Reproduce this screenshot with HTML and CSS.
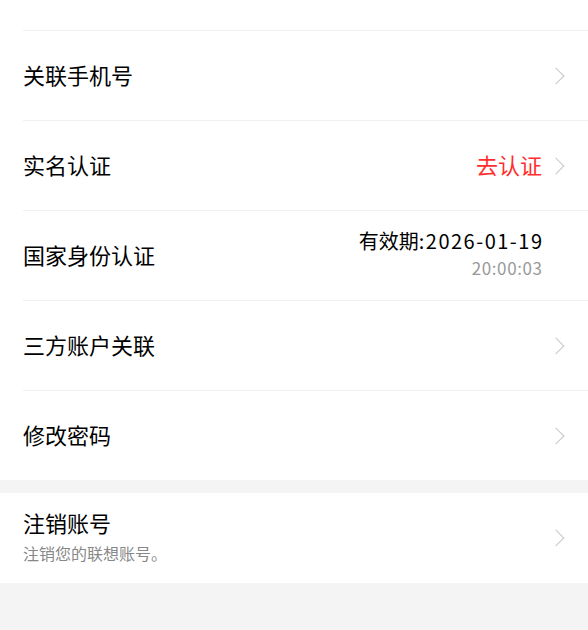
FILE: index.html
```html
<!DOCTYPE html>
<html lang="zh-CN">
<head>
    <meta charset="UTF-8">
    <title>账号与安全</title>
    <link rel="stylesheet" href="styles.css">
</head>
<body>
<div class="page">
    <div class="group">
        <div class="top-space"></div>
        <div class="row">
            <span class="label">关联手机号</span>
            <span class="arrow"></span>
        </div>
        <div class="row">
            <span class="label">实名认证</span>
            <span class="value red">去认证</span>
            <span class="arrow"></span>
        </div>
        <div class="row">
            <span class="label">国家身份认证</span>
            <div class="expire">
                <div class="expire-date">有效期<span class="num">:2026-01-19</span></div>
                <div class="expire-time">20:00:03</div>
            </div>
            <span class="arrow-space"></span>
        </div>
        <div class="row">
            <span class="label">三方账户关联</span>
            <span class="arrow"></span>
        </div>
        <div class="row">
            <span class="label">修改密码</span>
            <span class="arrow"></span>
        </div>
    </div>

    <div class="group cancel">
        <div class="row single">
            <div class="cancel-text">
                <div class="label">注销账号</div>
                <div class="sub">注销您的联想账号。</div>
            </div>
            <span class="arrow"></span>
        </div>
    </div>
</div>
</body>
</html>
```

FILE: styles.css
```css
html, body {
    margin: 0;
    padding: 0;
    background-color: #f4f4f4;
}
.page {
    font-family: "Noto Sans CJK SC", "Noto Sans", sans-serif;
    color: #000;
}
.group {
    background-color: #fff;
    padding-left: 23px;
}
.top-space {
    height: 30px;
}
.row {
    display: flex;
    align-items: center;
    height: 90px;
    box-sizing: border-box;
    border-top: 1px solid #f0f0f0;
    padding-right: 24px;
}
.row.single {
    border-top: none;
}
.label {
    flex: 1;
    font-size: 22px;
    margin-top: -3px;
}
.value {
    font-size: 22px;
    margin-right: 13px;
    margin-top: -3px;
}
.red {
    color: #ff2d2d;
}
.arrow {
    width: 9px;
    height: 18px;
    position: relative;
}
.arrow::after {
    content: "";
    position: absolute;
    top: 3px;
    left: -5px;
    width: 11px;
    height: 11px;
    border-top: 1.5px solid #c8c8c8;
    border-right: 1.5px solid #c8c8c8;
    transform: rotate(45deg);
}
.arrow-space {
    width: 22px;
}
.expire {
    flex-shrink: 0;
    white-space: nowrap;
    text-align: right;
    margin-top: -4px;
}
.expire-date {
    font-size: 20px;
    line-height: 26px;
}
.num {
    letter-spacing: 1.5px;
    margin-right: -1.5px;
}
.expire-time {
    font-size: 17px;
    line-height: 24px;
    margin-top: 2px;
    color: #999;
    letter-spacing: 0.6px;
    margin-right: -0.6px;
}
.cancel {
    margin-top: 13px;
}
.cancel-text {
    flex: 1;
}
.cancel-text .label {
    line-height: 30px;
    margin-top: -4px;
}
.sub {
    font-size: 16px;
    color: #888;
    margin-top: 4px;
}
```
